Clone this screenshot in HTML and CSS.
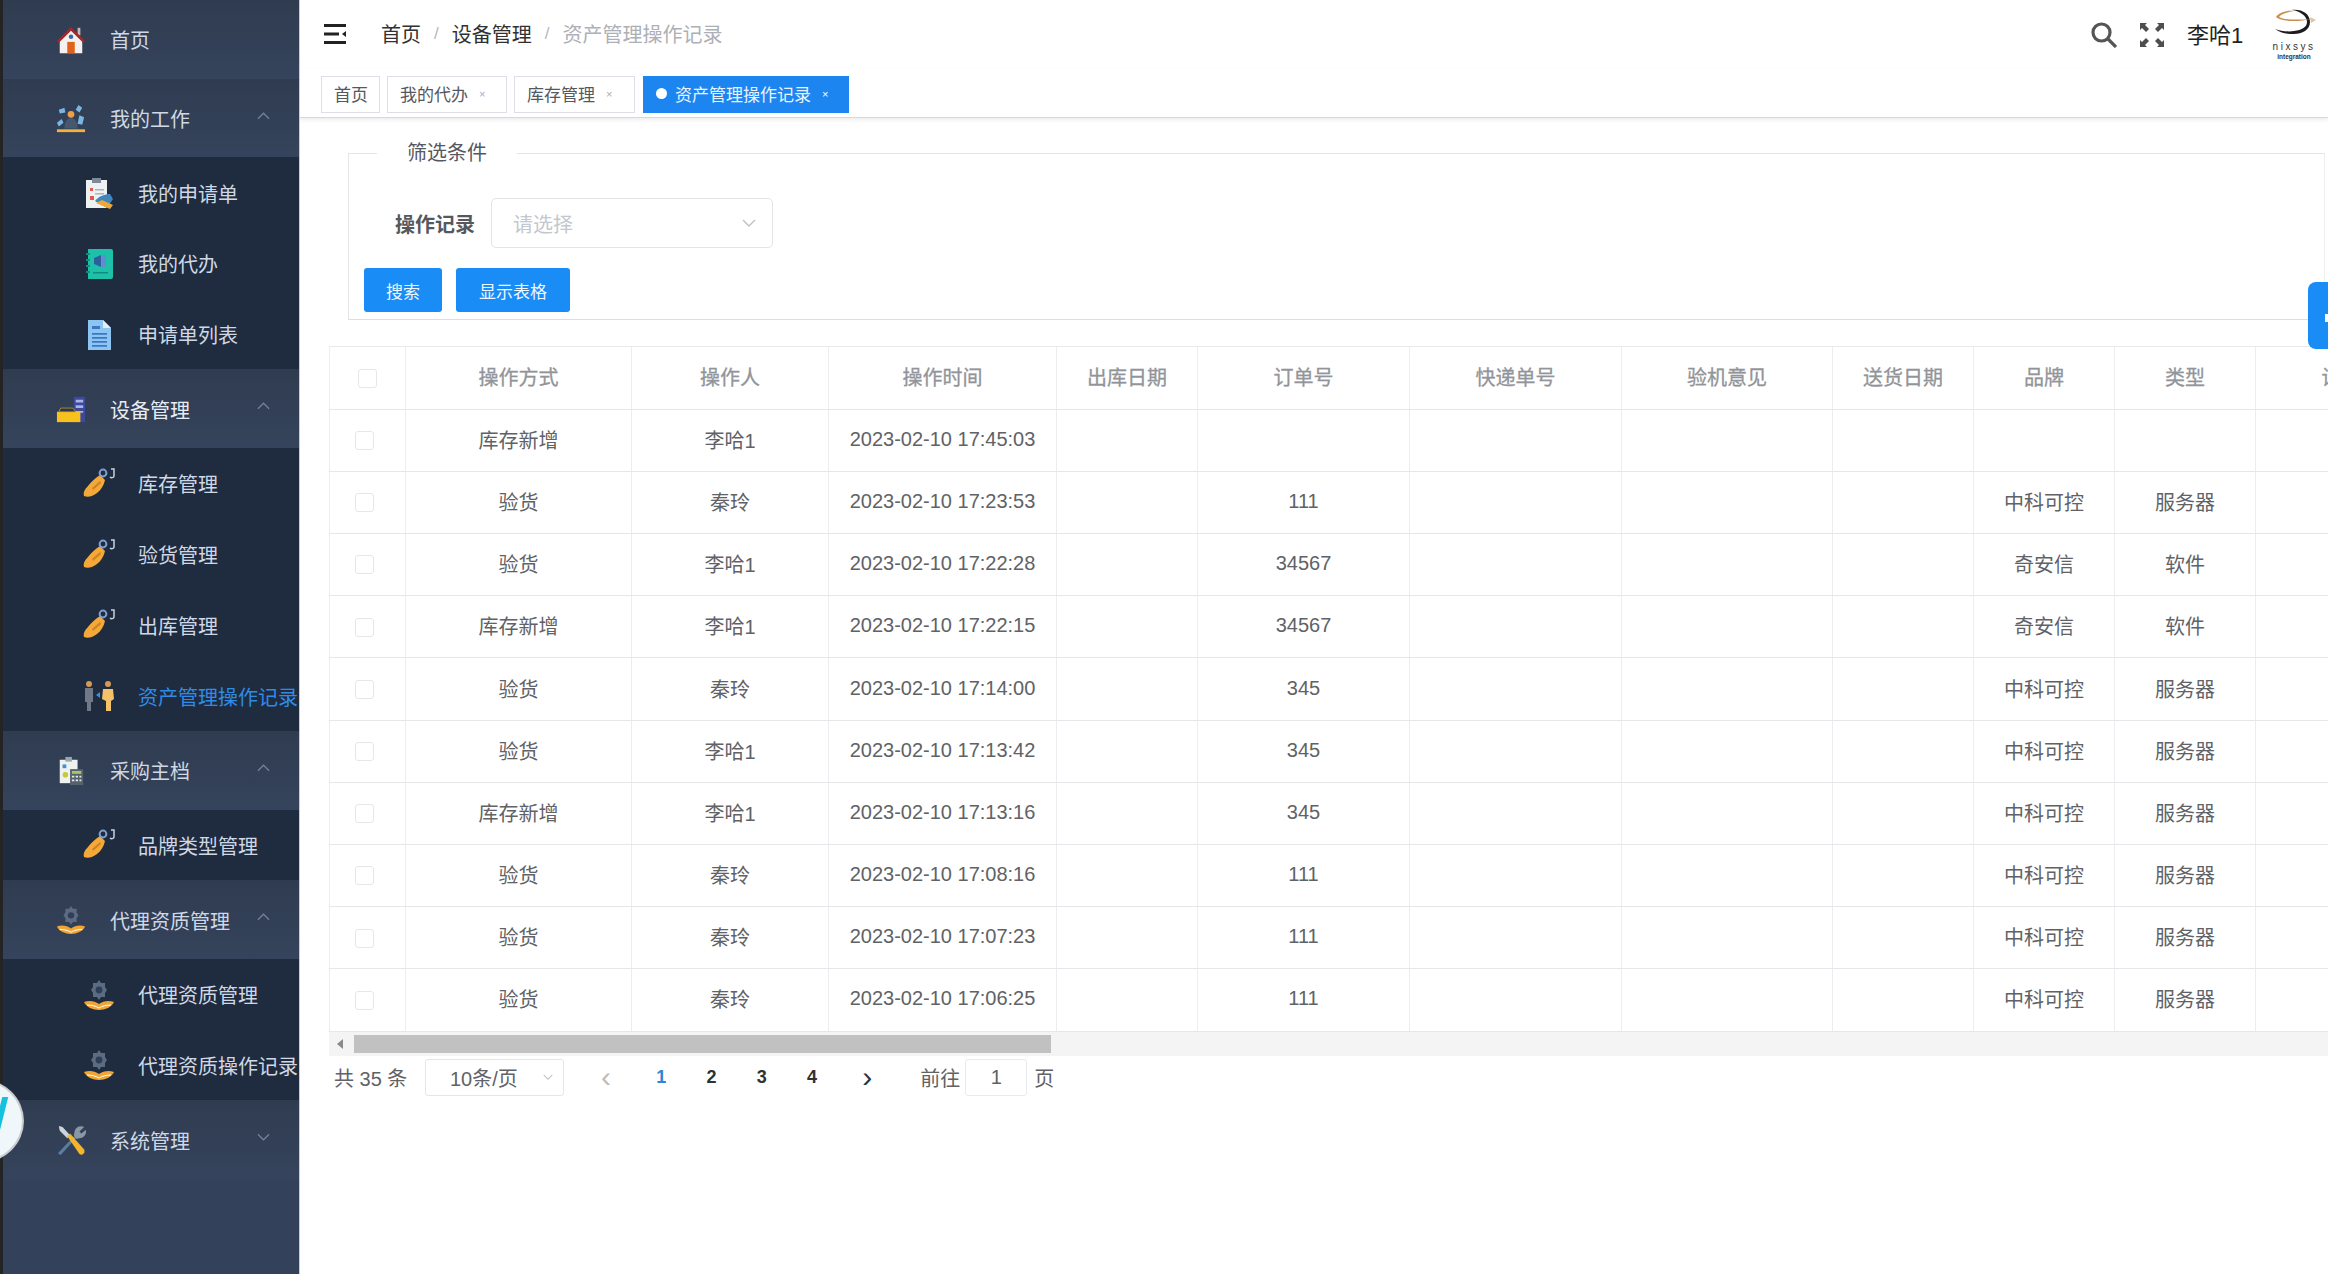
FILE: index.html
```html
<!DOCTYPE html>
<html lang="zh-CN">
<head>
<meta charset="utf-8">
<title>资产管理操作记录</title>
<link rel="stylesheet" href="styles.css">
</head>
<body>
<svg class="defs" width="0" height="0" aria-hidden="true">
  <defs>
    <symbol id="i-home" viewBox="0 0 32 32">
      <path d="M23 3h3v8h-3z" fill="#c9b6b0"/>
      <path d="M4 17 16 5l12 12v13H4z" fill="#f4f1ee"/>
      <path d="M1 17 16 2l15 15-2 2L16 6 3 19z" fill="#a5262c"/>
      <circle cx="16" cy="12.500" r="2.400" fill="#2f6fa8"/>
      <path d="M12 18h8v12h-8z" fill="#e0601c"/>
    </symbol>
    <symbol id="i-work" viewBox="0 0 32 32">
      <path d="M1 27h30v3H1z" fill="#f0b43a"/>
      <circle cx="16" cy="11" r="3.600" fill="#e8a04a"/>
      <path d="M9 26c0-7 3-11 7-11s7 4 7 11z" fill="#46586e"/>
      <path d="m3 6 6-2 1 5-6 1zM24 1l4 3-3 5-4-3zM25 12l5 2-2 8-5-1zM1 20l5-4 2 4-5 4z" fill="#79b4e4"/>
    </symbol>
    <symbol id="i-clip" viewBox="0 0 32 32">
      <path d="M3 3h21v28H3z" fill="#eef1f1"/>
      <path d="M9 1h9v5H9z" fill="#7d8b98"/>
      <path d="M7 11h3v3H7zM7 19h4v4H7z" fill="#df5a4a"/>
      <path d="M12 12h9v1.500h-9zM12 16h9v1.500h-9z" fill="#aab4bd"/>
      <path d="M12 24c4-5 10-7 15-7l3 5-6 9z" fill="#3f86bd"/>
      <path d="m13 26 6-3 11 5-3 4z" fill="#eea83a"/>
    </symbol>
    <symbol id="i-book" viewBox="0 0 32 32">
      <path d="M5 1h23a2 2 0 0 1 2 2v26a2 2 0 0 1-2 2H5z" fill="#1fc0a8"/>
      <path d="M3 5h4v2H3zM3 11h4v2H3zM3 17h4v2H3zM3 23h4v2H3z" fill="#0e8e80"/>
      <path d="m11 10 7-3v12l-7-3z" fill="#2c5f9e"/>
      <path d="M19 7h4v12h-4z" fill="#5c8ed0"/>
      <path d="M10 24h15v1.500H10z" fill="#0e8e80"/>
    </symbol>
    <symbol id="i-doc" viewBox="0 0 32 32">
      <path d="M5 1h15l8 8v22H5z" fill="#8dc4f2"/>
      <path d="m20 1 8 8h-8z" fill="#e1effb"/>
      <path d="M9 7h8v3H9z" fill="#3a78c4"/>
      <path d="M9 14h15v1.800H9zM9 18h15v1.800H9zM9 22h15v1.800H9zM9 26h15v1.800H9z" fill="#3a78c4"/>
    </symbol>
    <symbol id="i-device" viewBox="0 0 32 32">
      <path d="M19 3h12v27H19z" fill="#3d4a9c"/>
      <path d="M21 6h8v3h-8zM21 12h8v3h-8zM21 18h8v2h-8z" fill="#a8b2e4"/>
      <path d="M1 19h25v11H1z" fill="#f7c21e"/>
      <path d="M5 15h13l3 4H3z" fill="#2b3850" stroke="#c9a02a" stroke-width=".8"/>
    </symbol>
    <symbol id="i-whistle" viewBox="0 0 32 32">
      <path d="M1 28c-1-4 1-7 4-10 3-4 7-8 12-11l5 5c-1 5-4 10-8 13-4 3-9 5-13 3z" fill="#f4a838"/>
      <path d="m9 20 8-7 1 2-8 7z" fill="#cf8222"/>
      <circle cx="20" cy="5" r="3.400" fill="none" stroke="#7f9fd0" stroke-width="2"/>
      <path d="M28 1h3v7c0 2-3 2-4 1" fill="none" stroke="#c9d2dc" stroke-width="1.500"/>
    </symbol>
    <symbol id="i-people" viewBox="0 0 32 32">
      <circle cx="6" cy="4" r="3" fill="#d49a55"/>
      <path d="M2 8h8v14H8v9H4v-9H2z" fill="#6f7a86"/>
      <path d="m13 15 4-3v6z" fill="#3a8fe0"/>
      <circle cx="25" cy="4" r="3" fill="#d49a55"/>
      <path d="M20 9h10l1 10-3 2v10h-5V21l-4-2z" fill="#f4c06a"/>
    </symbol>
    <symbol id="i-calc" viewBox="0 0 32 32">
      <path d="M4 4h19v25H4z" fill="#edf1ef"/>
      <path d="M10 1h7v5h-7z" fill="#9aa5b0"/>
      <path d="M7 9h4v4H7z" fill="#3f8fd6"/>
      <circle cx="10" cy="20" r="3" fill="#c7c93c"/>
      <path d="M15 14h14v17H15z" fill="#55616c"/>
      <path d="M17 16h10v3H17z" fill="#a7c85c"/>
      <path d="M17 21h2.500v2H17zM21 21h2.500v2H21zM25 21h2v2h-2zM17 25h2.500v2H17zM21 25h2.500v2H21zM25 25h2v2h-2z" fill="#e6eaec"/>
    </symbol>
    <symbol id="i-hand" viewBox="0 0 32 32">
      <path d="M16 1l2 3h4v4l2 3-2 3v4h-4l-2 3-2-3h-4v-4l-2-3 2-3V4h4z" fill="#5b6b80"/>
      <circle cx="16" cy="11" r="3.400" fill="#2f3f58"/>
      <path d="M1 23c5-2 11-1 15 2 4-3 10-4 15-2-2 5-9 8-15 8S3 28 1 23z" fill="#f0a534"/>
      <path d="M4 26c4 0 9 1 12 3 3-2 8-3 12-3" fill="none" stroke="#fff" stroke-width="1"/>
    </symbol>
    <symbol id="i-tools" viewBox="0 0 32 32">
      <path d="M2 30 22 9l2 2L5 32z" fill="#5d7da0"/>
      <path d="M20 6c1-4 6-6 10-4l-5 5 2 2 5-4c1 4-2 9-7 9l-3 1-3-4z" fill="#8a97a6"/>
      <path d="M3 1 7 2l8 9-3 3-8-8z" fill="#ccd3da"/>
      <path d="m12 12 3-3 15 17c1 2 0 4-1 5s-3 1-4 0z" fill="#f2b52c"/>
    </symbol>
  </defs>
</svg>

<div class="app">
  <aside class="sidebar">
    <a class="menu-head"><svg class="menu-icon"><use href="#i-home"/></svg><span class="menu-text">首页</span></a>

    <a class="menu-head"><svg class="menu-icon"><use href="#i-work"/></svg><span class="menu-text">我的工作</span><svg class="chev" viewBox="0 0 14 8"><path d="M1 7l6-6 6 6"/></svg></a>
    <div class="submenu">
      <a class="menu-item"><svg class="menu-icon"><use href="#i-clip"/></svg><span class="menu-text">我的申请单</span></a>
      <a class="menu-item"><svg class="menu-icon"><use href="#i-book"/></svg><span class="menu-text">我的代办</span></a>
      <a class="menu-item"><svg class="menu-icon"><use href="#i-doc"/></svg><span class="menu-text">申请单列表</span></a>
    </div>

    <a class="menu-head"><svg class="menu-icon"><use href="#i-device"/></svg><span class="menu-text strong">设备管理</span><svg class="chev" viewBox="0 0 14 8"><path d="M1 7l6-6 6 6"/></svg></a>
    <div class="submenu">
      <a class="menu-item"><svg class="menu-icon"><use href="#i-whistle"/></svg><span class="menu-text">库存管理</span></a>
      <a class="menu-item"><svg class="menu-icon"><use href="#i-whistle"/></svg><span class="menu-text">验货管理</span></a>
      <a class="menu-item"><svg class="menu-icon"><use href="#i-whistle"/></svg><span class="menu-text">出库管理</span></a>
      <a class="menu-item active"><svg class="menu-icon"><use href="#i-people"/></svg><span class="menu-text">资产管理操作记录</span></a>
    </div>

    <a class="menu-head"><svg class="menu-icon"><use href="#i-calc"/></svg><span class="menu-text">采购主档</span><svg class="chev" viewBox="0 0 14 8"><path d="M1 7l6-6 6 6"/></svg></a>
    <div class="submenu">
      <a class="menu-item"><svg class="menu-icon"><use href="#i-whistle"/></svg><span class="menu-text">品牌类型管理</span></a>
    </div>

    <a class="menu-head"><svg class="menu-icon"><use href="#i-hand"/></svg><span class="menu-text">代理资质管理</span><svg class="chev" viewBox="0 0 14 8"><path d="M1 7l6-6 6 6"/></svg></a>
    <div class="submenu">
      <a class="menu-item"><svg class="menu-icon"><use href="#i-hand"/></svg><span class="menu-text">代理资质管理</span></a>
      <a class="menu-item"><svg class="menu-icon"><use href="#i-hand"/></svg><span class="menu-text">代理资质操作记录</span></a>
    </div>

    <a class="menu-head"><svg class="menu-icon"><use href="#i-tools"/></svg><span class="menu-text">系统管理</span><svg class="chev" viewBox="0 0 14 8"><path d="M1 1l6 6 6-6"/></svg></a>
  </aside>

  <main class="main">
    <header class="topbar">
      <svg class="hamburger" viewBox="0 0 22 20"><path d="M0 0h22v3H0zM0 8.500h15v3H0zM0 17h22v3H0zM22 7v6l-4-3z"/></svg>
      <nav class="crumbs">
        <span>首页</span><i>/</i><span>设备管理</span><i>/</i><span class="crumb-last">资产管理操作记录</span>
      </nav>
      <div class="top-right">
        <svg class="tool search" viewBox="0 0 26 26"><circle cx="10.500" cy="10.500" r="8.500"/><path d="m17 17 8 8"/></svg>
        <svg class="tool full" viewBox="0 0 26 26"><path d="M1 1h7L6 3l4 4-3 3-4-4-2 2zM25 1v7l-2-2-4 4-3-3 4-4-2-2zM1 25v-7l2 2 4-4 3 3-4 4 2 2zM25 25h-7l2-2-4-4 3-3 4 4 2-2z"/></svg>
        <span class="user">李哈1</span>
        <div class="logo">
          <svg viewBox="0 0 44 26"><path d="M20 1c10-1 18 4 18 12s-8 12-16 12c-7 0-14-1-19-5 6 2 13 3 19 2 8-1 13-4 13-9 0-6-7-11-15-12z" fill="#1c1c1c"/><path d="M4 8c3-5 12-7 18-6-6 1-13 3-15 6 5 3 18 3 32 2-12 3-29 3-35-2z" fill="#c98f4a"/><path d="M38 8l6 3-5 3z" fill="#e0c79a"/></svg>
          <b>nixsys</b>
          <em>integration</em>
        </div>
      </div>
    </header>

    <div class="tabs">
      <a class="tab t-home">首页</a>
      <a class="tab t-todo">我的代办<small>×</small></a>
      <a class="tab t-stock">库存管理<small>×</small></a>
      <a class="tab tab-active"><u></u>资产管理操作记录<small>×</small></a>
    </div>

    <section class="content">
      <fieldset class="filter">
        <legend>筛选条件</legend>
        <div class="filter-row">
          <label class="filter-label">操作记录</label>
          <div class="select">
            <span>请选择</span>
            <svg viewBox="0 0 14 8"><path d="M1 1l6 6 6-6"/></svg>
          </div>
        </div>
        <div class="actions">
          <button class="btn btn-search">搜索</button>
          <button class="btn btn-show">显示表格</button>
        </div>
      </fieldset>

      <div class="table-wrap">
        <table class="grid">
          <colgroup>
            <col class="c0"><col class="c1"><col class="c2"><col class="c3"><col class="c4"><col class="c5"><col class="c6"><col class="c7"><col class="c8"><col class="c9"><col class="c10"><col class="c11">
          </colgroup>
          <thead>
            <tr><th><span class="check"></span></th><th>操作方式</th><th>操作人</th><th>操作时间</th><th>出库日期</th><th>订单号</th><th>快递单号</th><th>验机意见</th><th>送货日期</th><th>品牌</th><th>类型</th><th>设备型号</th></tr>
          </thead>
          <tbody>
            <tr><td><span class="check"></span></td><td>库存新增</td><td>李哈1</td><td>2023-02-10 17:45:03</td><td></td><td></td><td></td><td></td><td></td><td></td><td></td><td></td></tr>
            <tr><td><span class="check"></span></td><td>验货</td><td>秦玲</td><td>2023-02-10 17:23:53</td><td></td><td>111</td><td></td><td></td><td></td><td>中科可控</td><td>服务器</td><td></td></tr>
            <tr><td><span class="check"></span></td><td>验货</td><td>李哈1</td><td>2023-02-10 17:22:28</td><td></td><td>34567</td><td></td><td></td><td></td><td>奇安信</td><td>软件</td><td></td></tr>
            <tr><td><span class="check"></span></td><td>库存新增</td><td>李哈1</td><td>2023-02-10 17:22:15</td><td></td><td>34567</td><td></td><td></td><td></td><td>奇安信</td><td>软件</td><td></td></tr>
            <tr><td><span class="check"></span></td><td>验货</td><td>秦玲</td><td>2023-02-10 17:14:00</td><td></td><td>345</td><td></td><td></td><td></td><td>中科可控</td><td>服务器</td><td></td></tr>
            <tr><td><span class="check"></span></td><td>验货</td><td>李哈1</td><td>2023-02-10 17:13:42</td><td></td><td>345</td><td></td><td></td><td></td><td>中科可控</td><td>服务器</td><td></td></tr>
            <tr><td><span class="check"></span></td><td>库存新增</td><td>李哈1</td><td>2023-02-10 17:13:16</td><td></td><td>345</td><td></td><td></td><td></td><td>中科可控</td><td>服务器</td><td></td></tr>
            <tr><td><span class="check"></span></td><td>验货</td><td>秦玲</td><td>2023-02-10 17:08:16</td><td></td><td>111</td><td></td><td></td><td></td><td>中科可控</td><td>服务器</td><td></td></tr>
            <tr><td><span class="check"></span></td><td>验货</td><td>秦玲</td><td>2023-02-10 17:07:23</td><td></td><td>111</td><td></td><td></td><td></td><td>中科可控</td><td>服务器</td><td></td></tr>
            <tr><td><span class="check"></span></td><td>验货</td><td>秦玲</td><td>2023-02-10 17:06:25</td><td></td><td>111</td><td></td><td></td><td></td><td>中科可控</td><td>服务器</td><td></td></tr>
          </tbody>
        </table>
      </div>
      <div class="scrollbar">
        <span class="scroll-arrow"></span>
        <span class="scroll-thumb"></span>
      </div>

      <div class="pager">
        <span class="total">共 35 条</span>
        <div class="size">10条/页<svg viewBox="0 0 14 8"><path d="M1 1l6 6 6-6"/></svg></div>
        <span class="arrow off">‹</span>
        <span class="num cur">1</span><span class="num">2</span><span class="num">3</span><span class="num">4</span>
        <span class="arrow">›</span>
        <span class="goto">前往</span>
        <span class="page-input">1</span>
        <span class="unit">页</span>
      </div>
    </section>
  </main>
</div>

<div class="side-tab"><span></span></div>
<div class="float-ball"><span></span></div>
</body>
</html>
```

FILE: styles.css
```css
* { box-sizing: border-box; }
html, body { margin: 0; height: 100%; }
body {
  width: 2328px;
  height: 1274px;
  overflow: hidden;
  position: relative;
  background: #fff;
  font-family: "Liberation Sans", "Noto Sans CJK SC", sans-serif;
  font-size: 20px;
  color: #606266;
}
.defs { position: absolute; }
.app { display: flex; height: 1274px; }

/* sidebar */
.sidebar {
  width: 300px;
  flex: none;
  height: 1274px;
  border-left: 3px solid #242424;
  border-right: 1px solid #c8ccd8;
  background: #33415a;
  color: #cfd8e4;
}
.menu-head {
  display: flex;
  align-items: center;
  height: 78.700px;
  padding: 1px 0 0 53px;
  background: linear-gradient(180deg, #2f3c50 0%, #35435c 100%);
  position: relative;
}
.menu-head .menu-icon { width: 30px; height: 30px; flex: none; }
.menu-head .menu-text { margin-left: 24px; }
.strong { color: #e8edf3; }
.chev {
  position: absolute;
  left: 254px;
  top: 33px;
  width: 13px;
  height: 8px;
  fill: none;
  stroke: #75829a;
  stroke-width: 1.300;
}
.submenu { background: #1f2b3e; }
.menu-item {
  display: flex;
  align-items: center;
  height: 70.700px;
  padding: 1px 0 0 80px;
  white-space: nowrap;
}
.menu-item .menu-icon { width: 32px; height: 32px; flex: none; }
.menu-item .menu-text { margin-left: 23px; }
.menu-item.active .menu-text { color: #2f8be6; }

/* main */
.main { flex: 1; min-width: 0; overflow: hidden; }
.topbar {
  display: flex;
  align-items: center;
  height: 68px;
  padding-left: 24px;
}
.hamburger { width: 22px; height: 20px; fill: #222; flex: none; }
.crumbs { margin-left: 35px; padding-bottom: 1px; color: #303133; display: flex; align-items: center; }
.crumbs i { font-style: normal; color: #b5b8bf; margin: 0 13px; font-size: 17px; }
.crumb-last { color: #adb0b6; }
.top-right { margin-left: auto; display: flex; align-items: center; padding: 1px 11px 0 0; }
.tool { width: 26px; height: 26px; }
.search { fill: none; stroke: #555; stroke-width: 3.200; }
.full { fill: #4e4e4e; margin-left: 22px; }
.user { margin-left: 22px; padding-bottom: 3px; font-size: 22px; color: #222; width: 56px; white-space: nowrap; }
.logo {
  margin-left: 28px;
  padding-top: 5px;
  width: 46px;
  height: 62px;
  display: flex;
  flex-direction: column;
  align-items: center;
  color: #333;
  line-height: 1;
}
.logo svg { width: 44px; height: 26px; flex: none; }
.logo b { font-size: 10px; font-weight: 400; letter-spacing: 2.500px; margin-top: 7px; }
.logo em { font-size: 6.500px; font-style: normal; margin-top: 2px; font-weight: 700; }

.tabs {
  display: flex;
  align-items: stretch;
  height: 50px;
  padding: 8px 0 5px 21px;
  border-bottom: 1px solid #d6d8dc;
  box-shadow: 0 2px 4px rgba(0, 0, 0, .08);
  position: relative;
}
.tab {
  display: flex;
  align-items: center;
  height: 37px;
  border: 1px solid #dce0e6;
  font-size: 17px;
  color: #55585e;
  padding: 0 0 2px 12px;
  white-space: nowrap;
  flex: none;
}
.tab small { font-size: 11px; color: #aab; margin-left: 11px; }
.t-home { width: 59px; margin-right: 7px; padding-left: 12px; }
.t-todo { width: 120px; margin-right: 7px; }
.t-stock { width: 121px; margin-right: 8px; }
.tab-active {
  width: 206px;
  background: #1d85f0;
  border-color: #1d85f0;
  color: #e9f3fe;
}
.tab-active u { width: 11px; height: 11px; border-radius: 50%; background: #fff; margin-right: 8px; flex: none; }
.tab-active small { color: #fff; margin-left: 11px; }

.content { padding: 0 0 0 29px; }
.filter {
  margin: 23px 3px 0 19px;
  padding: 0;
  height: 179px;
  border: 0;
  border-top: 1px solid #e3e5e8;
  border-left: 1px solid #e3e5e8;
  border-bottom: 1px solid #dcdee2;
  border-right: 1px solid #eceef0;
  display: block;
  min-width: 0;
}
.filter legend {
  margin-left: 28px;
  padding: 0 30px;
  font-size: 20px;
  color: #55585e;
  line-height: 24px;
}
.filter-row { display: flex; align-items: center; margin-top: 33px; }
.filter-label { margin-left: 46px; font-weight: 700; color: #55585e; width: 96px; white-space: nowrap; }
.select {
  width: 282px;
  height: 50px;
  border: 1px solid #e2e4e8;
  border-radius: 5px;
  margin-left: 0;
  display: flex;
  align-items: center;
  justify-content: space-between;
  padding: 0 16px 0 21px;
  color: #c4c7cd;
}
.select svg { width: 14px; height: 8px; fill: none; stroke: #bdc0c6; stroke-width: 1.400; }
.actions { display: flex; margin-top: 20px; padding-left: 15px; gap: 14px; }
.btn {
  height: 44px;
  border: 0;
  border-radius: 3px;
  background: #1a8cf5;
  color: #eef6ff;
  font: inherit;
  font-size: 17px;
  padding: 0;
}
.btn-search { width: 78px; }
.btn-show { width: 114px; }

.table-wrap {
  margin-top: 26px;
  border-top: 1px solid #e8e9ec;
  width: 2000px;
  overflow: hidden;
}
.grid {
  table-layout: fixed;
  border-collapse: collapse;
  width: 2138px;
  text-align: center;
}
.c0 { width: 76px; } .c1 { width: 226px; } .c2 { width: 197px; } .c3 { width: 228px; }
.c4 { width: 141px; } .c5 { width: 212px; } .c6 { width: 212px; } .c7 { width: 211px; }
.c8 { width: 141px; } .c9 { width: 141px; } .c10 { width: 141px; } .c11 { width: 212px; }
.grid th, .grid td {
  height: 62.200px;
  padding: 0 0 2px;
  border-bottom: 1px solid #e6e7eb;
  border-right: 1px solid #ecedf0;
  white-space: nowrap;
  overflow: hidden;
}
.grid th { font-weight: 400; color: #919499; font-size: 20px; -webkit-text-stroke: .3px #919499; }
.grid th:first-child, .grid td:first-child { border-left: 1px solid #ecedf0; }
.check {
  display: inline-block;
  width: 19px;
  height: 19px;
  border: 1px solid #e6e7ea;
  border-radius: 3px;
  vertical-align: middle;
  position: relative;
  left: -3px;
}
th .check { left: 0; }
.scrollbar {
  display: flex;
  align-items: center;
  height: 24px;
  width: 2000px;
  background: #f4f4f5;
  padding: 0;
}
.scroll-arrow {
  width: 0;
  height: 0;
  margin-left: 8px;
  border: 5px solid transparent;
  border-right: 6px solid #8a8a8a;
  border-left: 0;
}
.scroll-thumb { width: 697px; height: 18px; margin-left: 11px; background: #c1c1c1; }

.pager { display: flex; align-items: center; height: 37px; margin-top: 3px; color: #606266; }
.total { margin-left: 5px; width: 91px; white-space: nowrap; }
.size {
  width: 139px;
  height: 37px;
  border: 1px solid #e5e6e9;
  border-radius: 3px;
  display: flex;
  align-items: center;
  justify-content: space-between;
  padding: 0 10px 0 24px;
  white-space: nowrap;
}
.size svg { width: 10px; height: 6px; fill: none; stroke: #c0c4cc; stroke-width: 1.500; }
.arrow { font-size: 30px; color: #303133; width: 22px; text-align: center; line-height: 30px; }
.arrow.off { margin-left: 31px; color: #b9bcc2; }
.num { width: 50.300px; text-align: center; font-weight: 700; color: #303133; font-size: 18px; }
.num.cur { margin-left: 19px; color: #2f86d8; }
.num + .arrow { margin-left: 19px; }
.goto { margin-left: 42px; width: 45px; white-space: nowrap; }
.page-input {
  width: 62px;
  height: 37px;
  border: 1px solid #e9eaed;
  border-radius: 3px;
  display: flex;
  align-items: center;
  justify-content: center;
}
.unit { margin-left: 7px; }

/* overlays */
.side-tab {
  position: absolute;
  right: 0;
  top: 282px;
  width: 20px;
  height: 67px;
  background: #1a8cf5;
  border-radius: 8px 0 0 8px;
}
.side-tab span { position: absolute; right: 0; top: 32px; width: 3px; height: 8px; background: #fff; }
.float-ball {
  position: absolute;
  left: -64px;
  top: 1079px;
  width: 88px;
  height: 84px;
  border-radius: 50%;
  background: #f0f7fa;
  border: 2px solid #c9cdd0;
  overflow: hidden;
}
.float-ball span {
  position: absolute;
  left: 60px;
  top: 16px;
  width: 6px;
  height: 34px;
  background: #16c1e0;
  transform: skewX(-14deg);
}
```
